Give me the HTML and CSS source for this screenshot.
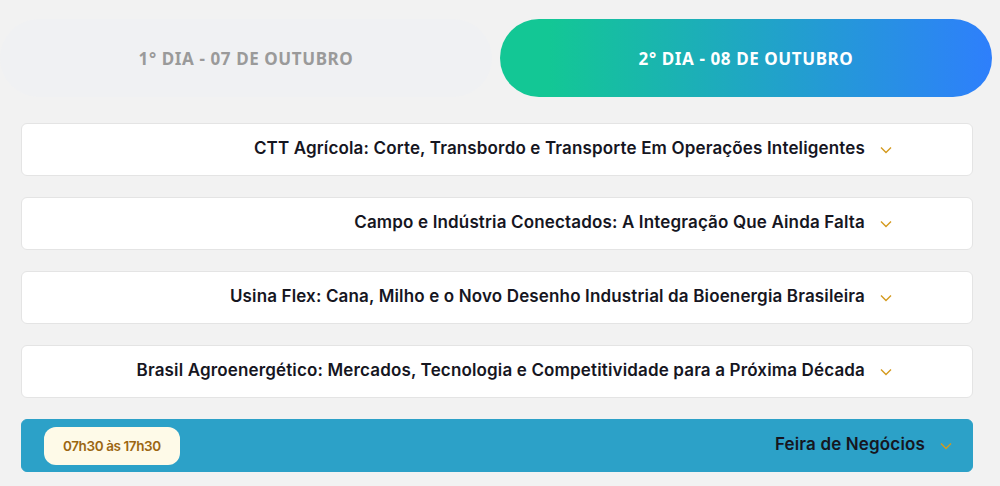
FILE: index.html
```html
<!DOCTYPE html>
<html lang="pt-BR">
<head>
    <meta charset="UTF-8">
    <meta name="viewport" content="width=device-width, initial-scale=1.0">
    <title>Programação</title>
    <link rel="stylesheet" href="styles.css">
</head>
<body>
  <div class="tabs">
    <a class="tab" href="#">1° DIA - 07 DE OUTUBRO</a>
    <a class="tab active" href="#">2° DIA - 08 DE OUTUBRO</a>
  </div>

  <div class="schedule">
    <div class="item">
      <span class="item-title">CTT Agrícola: Corte, Transbordo e Transporte Em Operações Inteligentes</span>
      <svg class="chevron" viewBox="0 0 12 8"><path d="M1 1.5l5 5 5-5"/></svg>
    </div>
    <div class="item">
      <span class="item-title">Campo e Indústria Conectados: A Integração Que Ainda Falta</span>
      <svg class="chevron" viewBox="0 0 12 8"><path d="M1 1.5l5 5 5-5"/></svg>
    </div>
    <div class="item">
      <span class="item-title">Usina Flex: Cana, Milho e o Novo Desenho Industrial da Bioenergia Brasileira</span>
      <svg class="chevron" viewBox="0 0 12 8"><path d="M1 1.5l5 5 5-5"/></svg>
    </div>
    <div class="item">
      <span class="item-title">Brasil Agroenergético: Mercados, Tecnologia e Competitividade para a Próxima Década</span>
      <svg class="chevron" viewBox="0 0 12 8"><path d="M1 1.5l5 5 5-5"/></svg>
    </div>
    <div class="item item-fair">
      <span class="time">07h30 às 17h30</span>
      <span class="item-title">Feira de Negócios</span>
      <svg class="chevron" viewBox="0 0 12 8"><path d="M1 1.5l5 5 5-5"/></svg>
    </div>
  </div>
</body>
</html>
```

FILE: styles.css
```css
body {
  margin: 0;
  padding: 19px 0 0;
  background-color: #f2f2f2;
  font-family: "Inter", "Noto Sans", sans-serif;
}

/* day tabs */
.tabs {
  display: flex;
  gap: 8px;
  padding: 0 8px 0 0;
}
.tab {
  flex: 1;
  height: 78px;
  display: flex;
  align-items: center;
  justify-content: center;
  border-radius: 39px;
  background-color: #f0f1f3;
  color: #9a9a9a;
  font-family: "Noto Sans", sans-serif;
  font-weight: 700;
  font-size: 17px;
  letter-spacing: 0.6px;
  text-decoration: none;
}
.tab.active {
  background-image: linear-gradient(90deg, #13c795 10%, #2e7ffc 100%);
  color: #ffffff;
}

/* accordion items */
.schedule {
  display: flex;
  flex-direction: column;
  gap: 21px;
  margin: 26px 27px 0 21px;
}
.item {
  height: 51px;
  display: flex;
  align-items: center;
  justify-content: flex-end;
  gap: 15px;
  padding: 0 80px 0 22px;
  background-color: #ffffff;
  border: 1px solid #e4e4e4;
  border-radius: 6px;
}
.item-title {
  color: #16161f;
  font-weight: 600;
  font-size: 17px;
  letter-spacing: 0.15px;
  padding-bottom: 3px;
}
.chevron {
  width: 12px;
  height: 8px;
  fill: none;
  stroke: #d49a1e;
  stroke-width: 1.4;
  flex-shrink: 0;
}

.item-fair {
  background-color: #2ca1c8;
  border-color: #2ca1c8;
  padding-right: 20px;
}
.time {
  margin-right: auto;
  padding: 11px 19px;
  background-color: #fefae8;
  color: #9b6611;
  border-radius: 12px;
  font-size: 13.5px;
  font-weight: 600;
  letter-spacing: -0.4px;
}
```
